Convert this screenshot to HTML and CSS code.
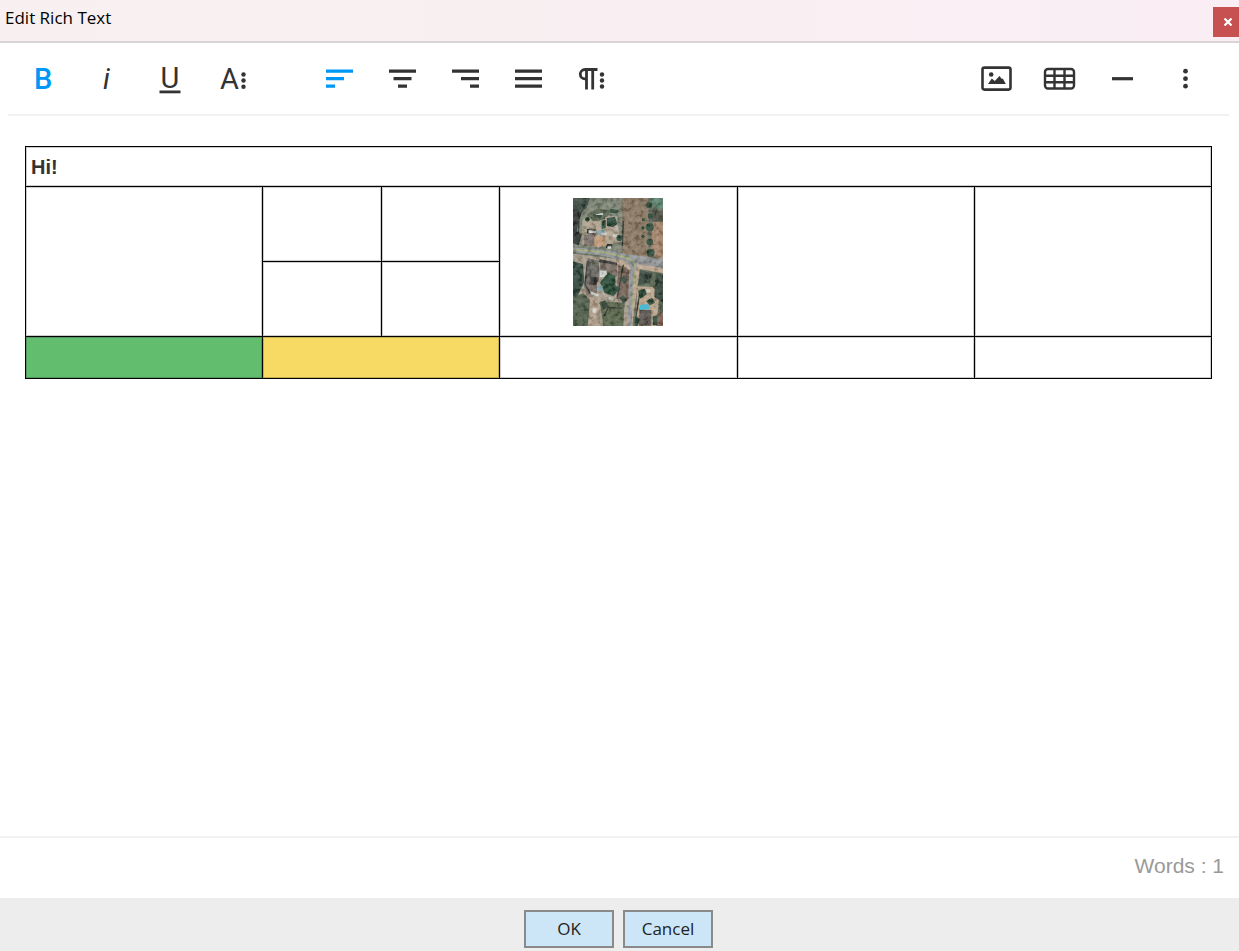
FILE: index.html
```html
<!DOCTYPE html>
<html lang="en">
<head>
<meta charset="utf-8">
<title>Edit Rich Text</title>
<link rel="stylesheet" href="styles.css">
</head>
<body>
<div class="dialog">
  <header class="titlebar">
    <h1 class="title">Edit Rich Text</h1>
    <button class="close" type="button" aria-label="Close"><svg width="10" height="8" viewBox="0 0 10 8"><path d="M1.500 .5 8.500 7.500M8.500 .5 1.500 7.500" stroke="#fff" stroke-width="2.200"/></svg></button>
  </header>

  <div class="toolbar" role="toolbar" aria-label="Formatting">
    <div class="group">
      <button class="tool active" type="button" aria-label="Bold"><svg class="icon" viewBox="0 0 39 40"><text class="letter strong" x="10" y="30">B</text></svg></button>
      <button class="tool" type="button" aria-label="Italic"><svg class="icon" viewBox="0 0 39 40"><text class="letter slanted" x="16" y="30">i</text></svg></button>
      <button class="tool" type="button" aria-label="Underline"><svg class="icon" viewBox="0 0 39 40"><text class="letter" x="20" y="29" text-anchor="middle">U</text><rect x="9.500" y="31.500" width="21" height="2.800"/></svg></button>
      <button class="tool" type="button" aria-label="More text"><svg class="icon" viewBox="0 0 39 40"><text class="letter" x="7" y="30">A</text><circle cx="30.500" cy="15.500" r="2.200"/><circle cx="30.500" cy="21.500" r="2.200"/><circle cx="30.500" cy="27.700" r="2.200"/></svg></button>
    </div>
    <div class="group">
      <button class="tool active" type="button" aria-label="Align left"><svg class="icon" viewBox="0 0 39 40"><path d="M6 10.500h27v3.200H6zM6 18.100h18v3.200H6zM6 25.600h9v3.200H6z"/></svg></button>
      <button class="tool" type="button" aria-label="Align center"><svg class="icon" viewBox="0 0 39 40"><path d="M6 10.500h27v3.200H6zM10.500 18.100h18v3.200h-18zM15 25.600h9v3.200h-9z"/></svg></button>
      <button class="tool" type="button" aria-label="Align right"><svg class="icon" viewBox="0 0 39 40"><path d="M6 10.500h27v3.200H6zM15 18.100h18v3.200H15zM24 25.600h9v3.200h-9z"/></svg></button>
      <button class="tool" type="button" aria-label="Justify"><svg class="icon" viewBox="0 0 39 40"><path d="M6 10.500h27v3.200H6zM6 18.100h27v3.200H6zM6 25.600h27v3.200H6z"/></svg></button>
      <button class="tool" type="button" aria-label="More paragraph"><svg class="icon" viewBox="0 0 39 40"><path class="line" stroke-width="2.800" d="M25.500 10.500H13a4.700 4.700 0 0 0 0 9.400h1.500M14.500 10v20.500M20.700 10v20.500"/><circle cx="30" cy="15.500" r="2.200"/><circle cx="30" cy="21.500" r="2.200"/><circle cx="30" cy="27.500" r="2.200"/></svg></button>
    </div>
    <div class="group end">
      <button class="tool" type="button" aria-label="Insert image"><svg class="icon" viewBox="0 0 39 40"><rect class="line" x="5.500" y="8.600" width="28" height="22" rx="2" stroke-width="2.600"/><circle cx="14.200" cy="15.500" r="2.300"/><path d="M11 25l3.800-5.500 3 2.500 4.700-5 2.300 3 1-.5 3 5.500z"/></svg></button>
      <button class="tool" type="button" aria-label="Insert table"><svg class="icon" viewBox="0 0 39 40"><path class="line" stroke-width="2.400" d="M8 10h23a3 3 0 0 1 3 3v13.500a3 3 0 0 1-3 3H8a3 3 0 0 1-3-3V13a3 3 0 0 1 3-3zM5 16.700h29M5 23.200h29M14.500 10v19.500M24.500 10v19.500"/></svg></button>
      <button class="tool" type="button" aria-label="Insert horizontal line"><svg class="icon" viewBox="0 0 39 40"><rect x="9" y="18.100" width="21" height="3.200"/></svg></button>
      <button class="tool" type="button" aria-label="More options"><svg class="icon" viewBox="0 0 39 40"><circle cx="19.500" cy="12.200" r="2.400"/><circle cx="19.500" cy="19.700" r="2.400"/><circle cx="19.500" cy="27.200" r="2.400"/></svg></button>
    </div>
  </div>

  <main class="editor">
    <table class="grid">
      <colgroup><col class="wide"><col class="half"><col class="half"><col class="wide"><col class="wide"><col class="wide"></colgroup>
      <tbody>
        <tr class="short"><td colspan="6"><strong>Hi!</strong></td></tr>
        <tr class="tall"><td rowspan="2"></td><td></td><td></td>
          <td rowspan="2">
            <svg class="photo" viewBox="0 0 270 384" preserveAspectRatio="none" role="img" aria-label="Aerial view of houses along a road">
              <defs>
                <filter id="grain" x="0" y="0" width="100%" height="100%">
                  <feTurbulence type="fractalNoise" baseFrequency=".07" numOctaves="3" seed="8"/>
                  <feColorMatrix values="2.200 0 0 0 -.75 2.200 0 0 0 -.72 2.200 0 0 0 -.75 0 0 0 0 .17"/>
                </filter>
              </defs>
              <path fill="#626a5c" d="M0 0h270v384H0z"/>
              <path fill="#35443b" d="M0 0h52l-8 26-20 26-24 14z"/>
              <path fill="#7b8272" d="M52 0h96v165L0 145V65l40-35z"/>
              <path fill="#89745e" d="M148 0h78v190l-78-22z"/>
              <path fill="#a68369" d="M240 72h30v112l-40-10z"/>
              <path fill="#557f69" d="M229 0h41v35l-28-10z"/>
              <path fill="#47483c" d="M235 38h35v32h-35z"/>
              <path fill="#b0a28d" d="M28 65l48-18 54 10 12 75-64 16-50-8z"/>
              <path fill="#555f4b" d="M42 50l30-18 44 5-18 26-38 7z"/>
              <path fill="#796c67" d="M34 112h32v32H34zM48 88l22 6v18H44z"/>
              <path fill="#c19672" d="M64 115h32v30H64z"/>
              <path fill="#c0aaa0" d="M95 58l38-3v38l-30-2z"/>
              <path fill="#20402f" d="M101 60l25-4 6 22-12 10-18-5zM86 68l12-3v25l-12 3zM112 32l24 4-2 10-22-2z"/>
              <path fill="#759dab" d="M75 97h20v12H75z"/>
              <g fill="#213f2e"><circle cx="230" cy="88" r="12"/><circle cx="230" cy="132" r="10"/><circle cx="233" cy="164" r="12"/><circle cx="228" cy="22" r="9"/><circle cx="232" cy="54" r="8"/><circle cx="211" cy="65" r="5"/><circle cx="210" cy="90" r="5"/><circle cx="210" cy="115" r="5"/><circle cx="139" cy="120" r="9"/><circle cx="78" cy="52" r="8"/><circle cx="43" cy="64" r="7"/></g>
              <path fill="#272e2b" d="M0 28l20 10-8 62 14 10-8 32-18-6zM42 92l24 5-2 12-22-3zM102 138h16v13H98z"/>
              <path fill="#a99b8a" d="M0 167l135 16 44 8v193H0z"/>
              <path fill="#2b4036" d="M0 190l30 8 4 53-20 42-14 4z"/>
              <path fill="#66635d" d="M44 181l34 7v55l-25 40-20-15z"/>
              <path fill="#776960" d="M80 188l52 9v40l-26-8-24-14zM38 258h34v32H38z"/>
              <path fill="#745e52" d="M136 203h33l-3 103-36-4z"/>
              <path fill="#343230" d="M52 238h25l-6 22H48zM78 190l3-6 51 10v7l-53-8z"/>
              <path fill="#d2d8d5" d="M81 218h20v19H81z"/>
              <path fill="#234531" d="M105 224l22 10v28l14 9-20 24-26-10-14-31z"/>
              <path fill="#779da6" d="M75 263h14v16H75z"/>
              <path fill="#4a5945" d="M0 296l30-10 22 20-8 78H0z"/>
              <path fill="#b49c87" d="M51 298l22 9 11 26-15 12-3 39H48z"/>
              <path fill="#536045" d="M80 310l75 4-4 70H91z"/>
              <path fill="#303f33" d="M78 315l18-8 10 20-14 7zM142 245l10-13 12 14-10 14zM139 300l12-9 11 15-10 12z"/>
              <path fill="#58634f" d="M198 210l72 15v159h-78z"/>
              <path fill="#bba287" d="M193 265l46 2 20 26-9 91h-63z"/>
              <path fill="#2f3f34" d="M202 217l35 8-6 30-34 4zM248 225l22 5v84l-26-18z"/>
              <path fill="#554d48" d="M199 336h36v47h-37z"/>
              <path fill="#805c4f" d="M257 345h13v39h-16z"/>
              <path fill="#2b4737" d="M195 278l20-6 7 17-21 13zM219 310l18-11 9 15-16 8zM188 355l14 8-8 21h-8zM239 355l14-3v29h-13z"/>
              <path fill="#c1a68f" d="M132 184l138 20v22l-70-13-10 80-13 91h-18l18-158-18-19-27-8z"/>
              <path fill="#929496" d="M0 148l70 4 90 16 110 15v28l-77-13-13 90-4 96h-14l10-175-17-21-67-15-88-12z"/>
              <path fill="none" stroke="#a4af70" stroke-width="4" d="M0 154l82 8 72 15c22 5 34 18 33 40l-7 76v40"/>
              <g fill="#d3d2cb"><path d="M47 96l22 3v7H46zM85 104h16v7H85zM103 145h12v7h-12zM120 107h13v9h-13zM68 48l22-3v6H70zM107 296l14 4-3 8-12-3zM60 329l12 4-3 13-11-3zM220 274h12v9h-12zM85 226h15v7H85zM50 280l26 8v7l-28-6z"/></g>
              <path fill="none" stroke="#2a3029" stroke-width="4" d="M151 68l-3 77M151 200l-18 98M186 375l15-95M35 20L18 59l-2 62M43 190l-7 68 16 29M92 355l14-27 44 3"/>
              <path filter="url(#grain)" d="M0 0h270v384H0z"/>
              <path fill="#49b9d4" d="M201 321l25-3 3 16-28 2z"/>
            </svg>
          </td>
          <td rowspan="2"></td><td rowspan="2"></td></tr>
        <tr class="tall"><td></td><td></td></tr>
        <tr class="base"><td class="green"></td><td class="yellow" colspan="2"></td><td></td><td></td><td></td></tr>
      </tbody>
    </table>
  </main>

  <div class="status">Words : 1</div>
  <footer class="actions">
    <button class="action" type="button">OK</button>
    <button class="action" type="button">Cancel</button>
  </footer>
</div>
</body>
</html>
```

FILE: styles.css
```css
* { box-sizing: border-box; }

body {
  margin: 0;
  background: #fff;
  color: #333;
  font-family: "Liberation Sans", Arial, sans-serif;
}

button {
  margin: 0;
  padding: 0;
  border: 0;
  background: none;
  font: inherit;
  cursor: pointer;
}

.dialog {
  display: flex;
  flex-direction: column;
  min-height: 100vh;
}

.titlebar {
  display: flex;
  justify-content: space-between;
  align-items: flex-start;
  height: 43px;
  border-bottom: 2px solid #d9d5d7;
  background: linear-gradient(90deg, #f8f0f0, #faeef4);
}

.title {
  margin: 0;
  padding: 6px 5px;
  color: #000;
  font: 400 17px/24px "Open Sans", "Noto Sans", sans-serif;
}

.close {
  display: flex;
  justify-content: center;
  align-items: center;
  width: 26px;
  height: 30px;
  margin-top: 7px;
  padding-left: 4px;
  background: #c75050;
}

.toolbar {
  display: flex;
  gap: 44px;
  margin: 0 10px 0 8px;
  padding: 0 12px 0 4px;
  border-bottom: 2px solid #f1f1f1;
}

.group { display: flex; }

.end { margin-left: auto; }

.tool {
  display: flex;
  justify-content: center;
  align-items: center;
  width: 63px;
  height: 71px;
  color: #333;
}

.active { color: #0098f7; }

.icon {
  width: 39px;
  height: 40px;
  fill: currentColor;
}

.letter { font: 400 29px Roboto, sans-serif; }

.strong { font-weight: 500; }

.slanted { font-style: italic; }

.line {
  fill: none;
  stroke: currentColor;
}

.editor {
  flex: 1;
  padding: 30px 27px 30px 25px;
}

.grid {
  width: 100%;
  border-collapse: collapse;
  table-layout: fixed;
  font-size: 20px;
  line-height: 24px;
}

.grid td {
  padding: 0 5px;
  border: 1px solid #000;
  box-shadow: inset 0 0 0 1px rgba(0, 0, 0, 0.2);
}

.wide { width: 20%; }
.half { width: 10%; }
.short { height: 40px; }
.tall { height: 75px; }
.base { height: 42px; }

.grid .green { background: #62bd6f; }
.grid .yellow { background: #f7da64; }

.photo {
  display: block;
  width: 90px;
  height: 128px;
  margin: 0 auto;
}

.status {
  padding: 16px 15px 20px;
  border-top: 2px solid #f1f1f1;
  color: #999;
  font-size: 21px;
  line-height: 24px;
  text-align: right;
}

.actions {
  display: flex;
  justify-content: center;
  gap: 9px;
  padding: 12px 2px 3px 0;
  background: #ededed;
}

.action {
  width: 90px;
  height: 38px;
  border: 2px solid #8a8a8a;
  background: #cde6f7;
  color: #222;
  font: 400 17px/24px "Open Sans", "Noto Sans", sans-serif;
}
```
